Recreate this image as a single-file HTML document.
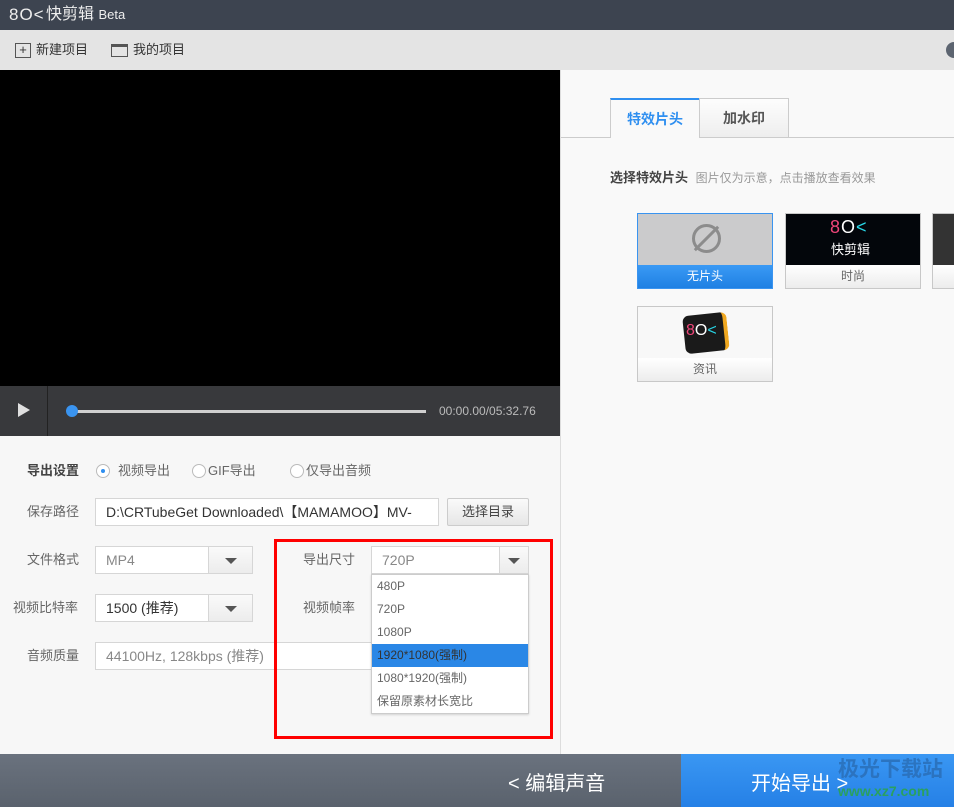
<!DOCTYPE html>
<html><head><meta charset="utf-8"><style>
*{margin:0;padding:0;box-sizing:border-box}
body{width:954px;height:807px;overflow:hidden;position:relative;font-family:"Liberation Sans","Noto Sans CJK SC",sans-serif;font-size:13px;color:#555;background:#f7f7f7}
.a{position:absolute}
.lbl{position:absolute;font-size:13px;color:#666;line-height:14px}
.inp{position:absolute;background:#fff;border:1px solid #d6d6d6;height:28px;line-height:26px;padding-left:10px;font-size:14px;color:#888}
.arr{position:absolute;right:0;top:0;width:44px;height:26px;border-left:1px solid #d6d6d6;background:linear-gradient(#fafafa,#ececec)}
.arr:after{content:"";position:absolute;left:50%;margin-left:-6px;top:11px;border-left:6px solid transparent;border-right:6px solid transparent;border-top:6px solid #555}
.radio{position:absolute;width:14px;height:14px;border:1px solid #bbb;border-radius:50%;background:#fff}
.thumb{position:absolute;width:136px;height:76px;border:1px solid #c8c8c8;background:#f4f4f4}
.thumb .cap{position:absolute;left:0;right:0;bottom:0;height:23px;line-height:23px;text-align:center;font-size:12px;color:#666;background:linear-gradient(#fff,#ececec)}
.dd div{height:23px;line-height:23px;padding-left:5px;font-size:12px;color:#666}
</style></head><body>
<div class="a" style="left:0;top:0;width:954px;height:30px;background:#3d4450"></div>
<div class="a" style="left:9px;top:6px;color:#eee;font-size:17px;line-height:18px;letter-spacing:1px">8O&lt;</div>
<div class="a" style="left:46px;top:6px;color:#eee;font-size:16px;line-height:18px">快剪辑 <span style="font-size:13px">Beta</span></div>
<div class="a" style="left:0;top:30px;width:954px;height:40px;background:#e4e4e4"></div>
<div class="a" style="left:15px;top:43px;width:16px;height:15px;border:1px solid #555;font-size:13px;line-height:12px;text-align:center;color:#333">+</div>
<div class="a" style="left:36px;top:43px;font-size:13px;line-height:14px;color:#333">新建项目</div>
<div class="a" style="left:111px;top:44px;width:17px;height:13px;border:1px solid #555;border-top-width:3px"></div>
<div class="a" style="left:133px;top:43px;font-size:13px;line-height:14px;color:#333">我的项目</div>
<div class="a" style="left:946px;top:42px;width:16px;height:16px;border-radius:50%;background:#5c6470"></div>
<div class="a" style="left:0;top:70px;width:560px;height:316px;background:#000"></div>
<div class="a" style="left:0;top:386px;width:560px;height:50px;background:#38393c"></div>
<div class="a" style="left:47px;top:386px;width:1px;height:50px;background:#222"></div>
<div class="a" style="left:18px;top:403px;border-top:7px solid transparent;border-bottom:7px solid transparent;border-left:12px solid #e0e0e0"></div>
<div class="a" style="left:70px;top:410px;width:356px;height:3px;background:#d0d0d0"></div>
<div class="a" style="left:66px;top:405px;width:12px;height:12px;border-radius:50%;background:#3a94f0"></div>
<div class="a" style="left:439px;top:404px;font-size:12px;line-height:14px;color:#bbb">00:00.00/05:32.76</div>
<div class="a" style="left:560px;top:70px;width:394px;height:684px;background:#f9f9f9;border-left:1px solid #ddd"></div>
<div class="a" style="left:561px;top:137px;width:393px;height:1px;background:#ccc"></div>
<div class="a" style="left:610px;top:98px;width:90px;height:40px;background:#f9f9f9;border:1px solid #ccc;border-top:2px solid #2f8ff0;border-bottom:none;text-align:center;line-height:38px;font-size:14px;font-weight:bold;color:#2f8ff0">特效片头</div>
<div class="a" style="left:699px;top:98px;width:90px;height:39px;background:linear-gradient(#fdfdfd,#eee);border:1px solid #ccc;border-bottom:none;text-align:center;line-height:38px;font-size:14px;font-weight:bold;color:#555">加水印</div>
<div class="a" style="left:610px;top:171px;font-size:13px;line-height:14px;font-weight:bold;color:#444">选择特效片头 <span style="font-weight:normal;font-size:12px;color:#999;margin-left:4px">图片仅为示意，点击播放查看效果</span></div>
<div class="thumb" style="left:637px;top:213px;border-color:#3a94f0;background:#cbcbcc"><div class="a" style="left:54px;top:10px;width:29px;height:29px;border:3px solid #8c8c8c;border-radius:50%"></div><div class="a" style="left:67px;top:8px;width:3px;height:33px;background:#8c8c8c;transform:rotate(45deg)"></div><div class="cap" style="color:#fff;background:linear-gradient(#3a9af5,#1f80e3)">无片头</div></div>
<div class="thumb" style="left:785px;top:213px;background:#03060b"><div class="a" style="left:44px;top:3px;font-size:18px;line-height:20px;color:#fff;letter-spacing:1px"><span style="color:#f0467a">8</span>O<span style="color:#28d6e6">&lt;</span></div><div class="a" style="left:45px;top:29px;font-size:13px;line-height:14px;color:#fff">快剪辑</div><div class="cap">时尚</div></div>
<div class="thumb" style="left:932px;top:213px;background:#333"><div class="cap"></div></div>
<div class="thumb" style="left:637px;top:306px;background:#f8f8f8"><div class="a" style="left:46px;top:7px;width:44px;height:38px;background:#1a1a1a;border-radius:6px;border-right:4px solid #f0a820;transform:rotate(-6deg)"></div><div class="a" style="left:48px;top:15px;font-size:16px;line-height:18px;color:#fff"><span style="color:#f0467a">8</span>O<span style="color:#28d6e6">&lt;</span></div><div class="cap">资讯</div></div>
<div class="a" style="left:27px;top:464px;font-size:13px;line-height:14px;font-weight:bold;color:#444">导出设置</div>
<div class="radio" style="left:96px;top:464px"></div><div class="a" style="left:101px;top:469px;width:4px;height:4px;border-radius:50%;background:#2f8ff0"></div>
<div class="lbl" style="left:118px;top:464px">视频导出</div>
<div class="radio" style="left:192px;top:464px"></div><div class="lbl" style="left:208px;top:464px">GIF导出</div>
<div class="radio" style="left:290px;top:464px"></div><div class="lbl" style="left:306px;top:464px">仅导出音频</div>
<div class="lbl" style="left:27px;top:505px">保存路径</div>
<div class="inp" style="left:95px;top:498px;width:344px;color:#333;font-size:14px;white-space:nowrap;overflow:hidden">D:\CRTubeGet Downloaded\【MAMAMOO】MV-</div>
<div class="a" style="left:447px;top:498px;width:82px;height:28px;border:1px solid #ccc;border-radius:2px;background:linear-gradient(#fafafa,#e6e6e6);text-align:center;line-height:26px;font-size:13px;color:#444">选择目录</div>
<div class="lbl" style="left:27px;top:553px">文件格式</div>
<div class="inp" style="left:95px;top:546px;width:158px">MP4<div class="arr"></div></div>
<div class="lbl" style="left:13px;top:601px">视频比特率</div>
<div class="inp" style="left:95px;top:594px;width:158px;color:#333">1500 (推荐)<div class="arr"></div></div>
<div class="lbl" style="left:27px;top:649px">音频质量</div>
<div class="inp" style="left:95px;top:642px;width:290px">44100Hz, 128kbps (推荐)</div>
<div class="lbl" style="left:303px;top:553px">导出尺寸</div>
<div class="inp" style="left:371px;top:546px;width:158px">720P<div class="arr" style="width:29px"></div></div>
<div class="lbl" style="left:303px;top:601px">视频帧率</div>
<div class="a dd" style="left:371px;top:574px;width:158px;height:140px;background:#fff;border:1px solid #ccc;box-shadow:0 1px 2px rgba(0,0,0,.15)">
<div>480P</div><div>720P</div><div>1080P</div><div style="background:#2a87e6;color:#333">1920*1080(强制)</div><div>1080*1920(强制)</div><div>保留原素材长宽比</div></div>
<div class="a" style="left:274px;top:539px;width:279px;height:200px;border:3px solid #f00"></div>
<div class="a" style="left:0;top:754px;width:681px;height:53px;background:linear-gradient(#6a727e,#5a626d)"></div>
<div class="a" style="left:681px;top:754px;width:273px;height:53px;background:linear-gradient(#3a97f3,#2580e6)"></div>
<div class="a" style="left:508px;top:773px;font-size:20px;line-height:22px;color:#fff">&lt; 编辑声音</div>
<div class="a" style="left:751px;top:773px;font-size:20px;line-height:22px;color:#fff">开始导出 &gt;</div>
<div class="a" style="left:838px;top:758px;font-size:21px;line-height:23px;font-weight:bold;color:#2a6fb8;opacity:.85">极光下载站</div>
<div class="a" style="left:838px;top:783px;font-size:14px;line-height:16px;font-weight:bold;color:#2aa060">www.xz7.com</div>
</body></html>
